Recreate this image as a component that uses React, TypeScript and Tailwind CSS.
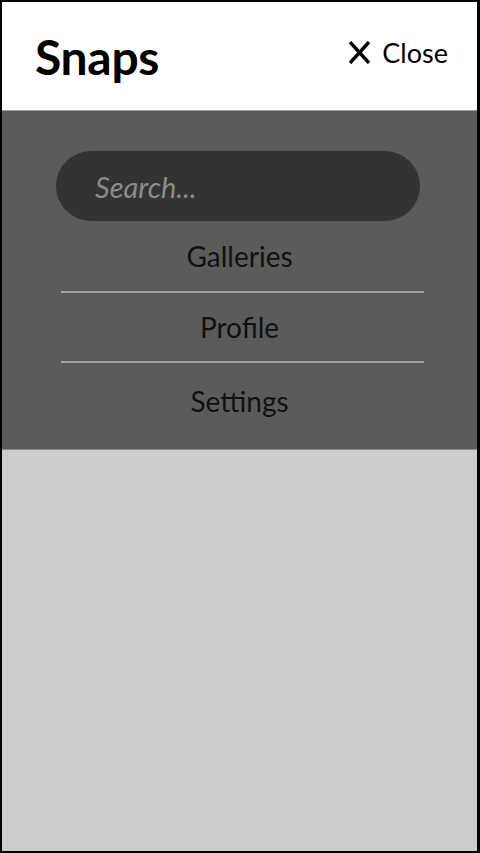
import React from 'react';

const font = { fontFamily: 'Lato, "Open Sans", sans-serif' };

export default function App() {
  const items = [
    { label: 'Galleries', h: 'h-[70px]' },
    { label: 'Profile', h: 'h-[68px]' },
    { label: 'Settings', h: 'h-[75px]' },
  ];

  return (
    <div
      className="w-[480px] h-[853px] flex flex-col bg-[#cccccc] border-t-2 border-l-2 border-b-2 border-r-[3px] border-black"
      style={font}
    >
      {/* Header */}
      <header className="h-[109px] shrink-0 bg-white flex items-center justify-between pl-[33px] pr-[29px] border-b border-[#9a9a9a]">
        <h1 className="text-[48px] font-bold text-black leading-none tracking-[-0.3px] mt-[1px]">Snaps</h1>
        <button className="flex items-center gap-[11px] text-[27px] text-black leading-none -mt-[8px]">
          <svg width="23" height="23" viewBox="0 0 23 23" className="mt-[1px]">
            <path d="M2 1 L21 22 M21 1 L2 22" stroke="black" strokeWidth="3.4" fill="none" />
          </svg>
          Close
        </button>
      </header>

      {/* Menu drawer */}
      <nav className="bg-[#5b5b5b] pt-[40px] pb-[11px] border-b border-[#8a8a8a]">
        <div className="ml-[54px] w-[364px] h-[70px] rounded-full bg-[#333333] flex items-center pl-[39px]">
          <span className="text-[29px] italic text-[#8c8c8c] leading-none">Search...</span>
        </div>
        <ul>
          {items.map((item, i) => (
            <li key={item.label}>
              {i > 0 && <div className="ml-[59px] w-[363px] h-[2px] bg-[#a0a0a0]" />}
              <div
                className={`${item.h} flex items-center justify-center text-[28px] text-[#111111] leading-none`}
              >
                {item.label}
              </div>
            </li>
          ))}
        </ul>
      </nav>

      <main className="flex-1" />
    </div>
  );
}
